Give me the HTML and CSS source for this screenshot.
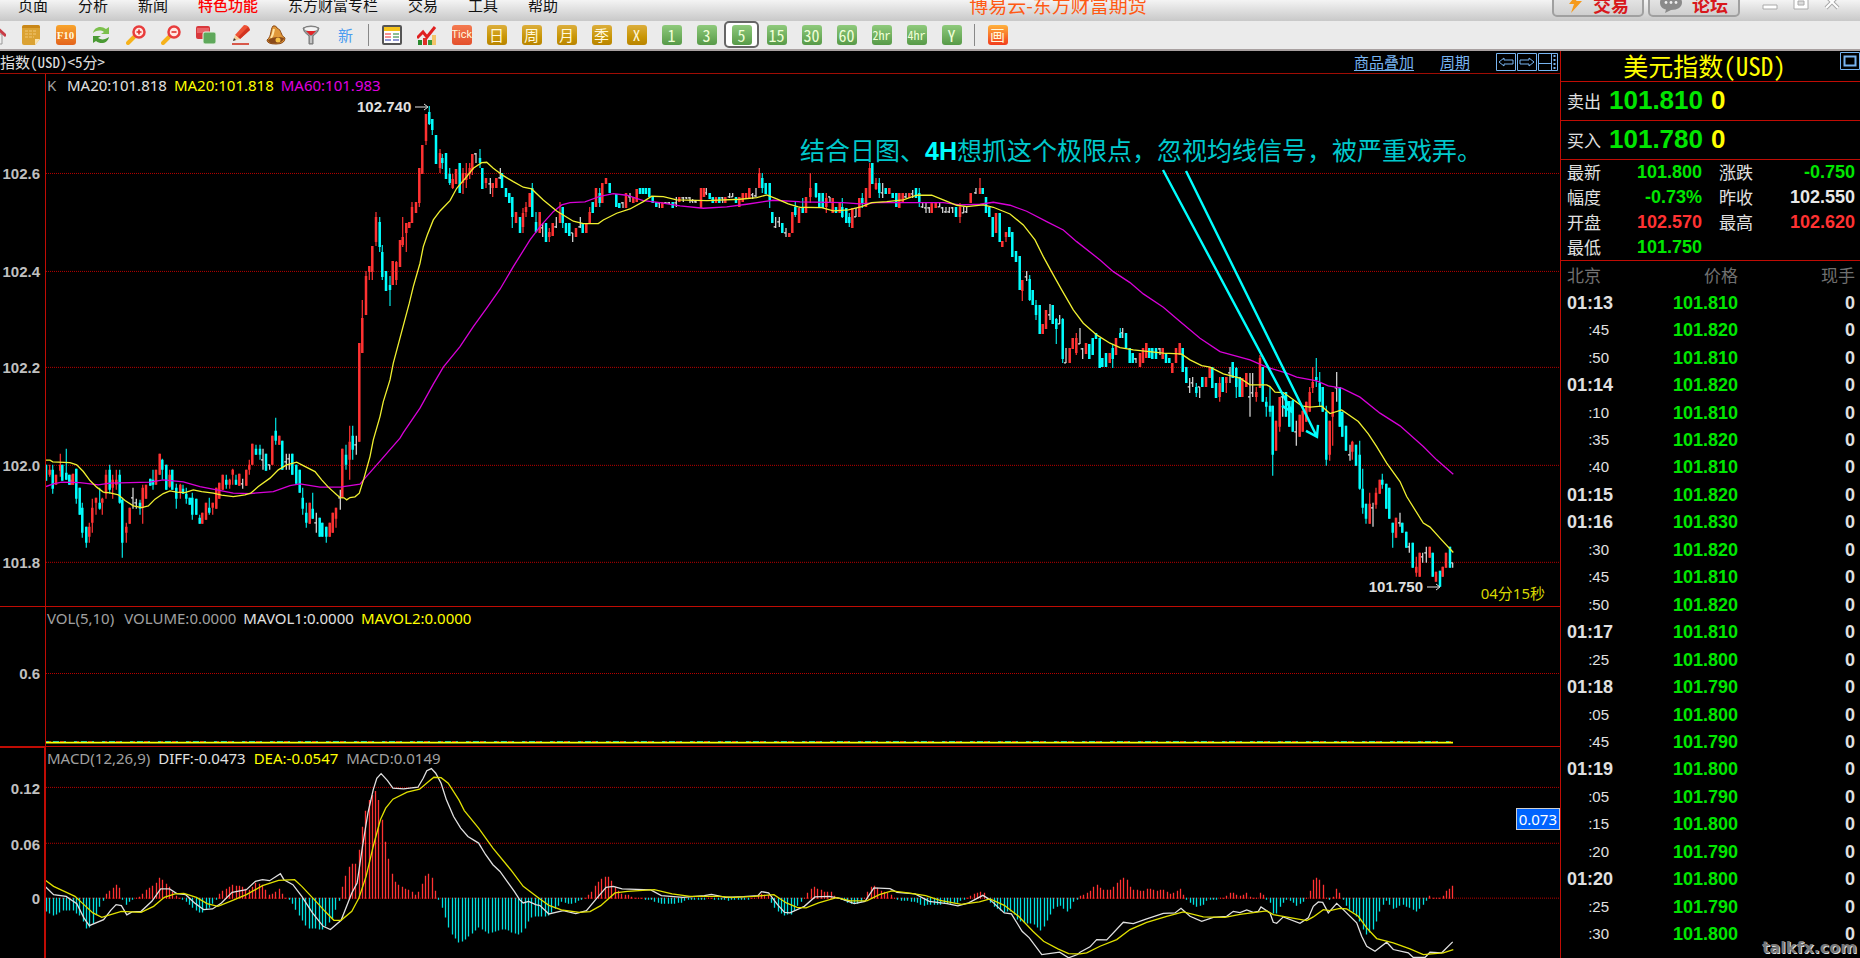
FILE: index.html
```html
<!DOCTYPE html>
<html lang="zh-CN">
<head>
<meta charset="utf-8">
<title>博易云-东方财富期货</title>
<link rel="stylesheet" href="styles.css">
</head>
<body>
<header class="menubar">
  <nav class="menus">
    <button>页面</button><button>分析</button><button>新闻</button><button class="hot">特色功能</button><button>东方财富专栏</button><button>交易</button><button>工具</button><button>帮助</button>
  </nav>
  <h1 class="app-title">博易云-东方财富期货</h1>
  <div class="window-tools">
    <button class="pill"><svg width="16" height="20" viewBox="0 0 16 20"><path d="M10 0L2 10h5L4 19 15 7H9l4-7z" fill="#f59a1c"/></svg>交易</button>
    <button class="pill"><svg width="22" height="18" viewBox="0 0 22 18"><path d="M11 0C4 0 0 3 0 7.500S3 14 6 14.500L5 18l6-3c7 0 11-3 11-7.500S18 0 11 0z" fill="#8a8a8a"/><g fill="#eee"><circle cx="6" cy="7.500" r="1.400"/><circle cx="11" cy="7.500" r="1.400"/><circle cx="16" cy="7.500" r="1.400"/></g></svg>论坛</button>
    <div class="win-buttons">
      <button aria-label="最小化"><svg width="16" height="14" viewBox="0 0 16 14"><path d="M1 9h14v4H1z" fill="#fff" stroke="#aaa"/></svg></button>
      <button aria-label="还原"><svg width="16" height="14" viewBox="0 0 16 14"><path d="M1 1h14v12H1z" fill="#fff" stroke="#aaa"/><path d="M5 5h6v4H5z" fill="#ddd" stroke="#aaa"/></svg></button>
      <button aria-label="关闭"><svg width="16" height="14" viewBox="0 0 16 14"><path d="M2 0L14 12M14 0L2 12" stroke="#aaa" stroke-width="4"/><path d="M2 0L14 12M14 0L2 12" stroke="#fff" stroke-width="2"/></svg></button>
    </div>
  </div>
</header>

<div class="toolbar">
  <button aria-label="首页"><svg width="20" height="20" viewBox="0 0 20 20"><path d="M4 9h12v10H4z" fill="#eee" stroke="#999"/><path d="M8 12h4v7H8z" fill="#b04040"/><path d="M0 11L10 2l10 9" fill="none" stroke="#c83c46" stroke-width="3"/></svg></button>
  <button aria-label="便签"><svg width="20" height="20" viewBox="0 0 20 20"><path d="M3 0h14q2 0 2 2v12l-5 6H3q-2 0-2-2V2q0-2 2-2z" fill="#dba233"/><path d="M1 3q0-3 3-3h13q2 0 2 3z" fill="#c98718"/><path d="M4 6h12M4 9h12M4 12h9" stroke="#f2c878" stroke-dasharray="3 1"/><path d="M14 20v-6h5z" fill="#fbe3ae"/></svg></button>
  <button aria-label="F10"><span class="tile f10">F10</span></button>
  <button aria-label="刷新"><svg width="20" height="20" viewBox="0 0 20 20"><path d="M2 8C3 2 10 0 15 4l3-2v7h-8l3-2C10 5 6 5 2 8z" fill="#7cc04c"/><path d="M18 12c-1 6-8 8-13 4l-3 2v-7h8l-3 2c3 2 7 2 11-1z" fill="#4a9a34"/></svg></button>
  <button aria-label="放大"><svg width="20" height="20" viewBox="0 0 20 20"><path d="M8 12l-6 6" stroke="#f6b21b" stroke-width="4" stroke-linecap="round"/><circle cx="13" cy="7" r="5.500" fill="#ffe8e4" stroke="#e83c3c" stroke-width="2.500"/><path d="M10.500 7h5M13 4.500v5" stroke="#e0302c" stroke-width="1.600"/></svg></button>
  <button aria-label="缩小"><svg width="20" height="20" viewBox="0 0 20 20"><path d="M8 12l-6 6" stroke="#f6b21b" stroke-width="4" stroke-linecap="round"/><circle cx="13" cy="7" r="5.500" fill="#ffe8e4" stroke="#e83c3c" stroke-width="2.500"/><path d="M10.500 7h5" stroke="#e0302c" stroke-width="1.600"/></svg></button>
  <button aria-label="叠加"><svg width="20" height="20" viewBox="0 0 20 20"><rect x="0" y="1" width="14" height="13" rx="2" fill="#d8383c"/><path d="M1 8h12V3H1z" fill="#ea6468"/><rect x="7" y="7" width="13" height="12" rx="2" fill="#5fa85b" stroke="#e8f2e6"/></svg></button>
  <button aria-label="画线"><svg width="20" height="20" viewBox="0 0 20 20"><path d="M4 10L13 0q5 0 6 5L9 14z" fill="#ee5236"/><path d="M7 12L17 2l2 3L9 14z" fill="#d23420"/><path d="M4 10l-2 6 7-2z" fill="#f4cf98"/><path d="M2 16l1-3 2 2z" fill="#333"/><path d="M1 19h17" stroke="#d8584a" stroke-width="2"/></svg></button>
  <button aria-label="预警"><svg width="20" height="20" viewBox="0 0 20 20"><path d="M7 1q3-1 4 2c5 2 3 7 8 10q0 6-9 6-9 0-9-4C6 11 4 5 7 1z" fill="#e0983a" stroke="#8a4712"/><path d="M8 4q-1 6-3 9" stroke="#ffe2a0" stroke-width="2" fill="none"/><path d="M2 15c4-3 11-4 16-2 0 6-15 8-16 2z" fill="#8a4a1a"/><circle cx="12" cy="15" r="2.500" fill="#f7c046"/></svg></button>
  <button aria-label="筛选"><svg width="20" height="20" viewBox="0 0 20 20"><path d="M2 3q8-4 16 0 0 4-6 8v8H8v-8Q2 7 2 3z" fill="#999" stroke="#777"/><ellipse cx="10" cy="4" rx="6.500" ry="2" fill="#f4f4f4"/><path d="M5 6h10l-4 4H9z" fill="#e02428"/><path d="M10 11v7" stroke="#eee"/></svg></button>
  <button class="new-btn">新</button>
  <i class="sep"></i>
  <button aria-label="报价"><svg width="20" height="20" viewBox="0 0 20 20"><rect x="1" y="1" width="18" height="18" rx="1" fill="#fff" stroke="#555" stroke-width="2"/><path d="M2 2h16v4H2z" fill="#f6c41c"/><path d="M3 9h6M3 12h6" stroke="#e22"/><path d="M11 9h6M11 12h6" stroke="#197a2b"/><path d="M3 15h6" stroke="#23a"/><path d="M11 15h6" stroke="#23a"/></svg></button>
  <button aria-label="走势"><svg width="20" height="20" viewBox="0 0 20 20"><path d="M1 15h4v5H1z" fill="#2a8a2e"/><path d="M6 13h4v7H6z" fill="#e03028"/><path d="M11 15h4v5h-4z" fill="#3a9a3a"/><path d="M15 10h4v10h-4z" fill="#f3c56a"/><path d="M0 13l6-6 4 5 8-10" fill="none" stroke="#e02020" stroke-width="3"/></svg></button>
  <button><span class="tile tick">Tick</span></button>
  <button><span class="tile gold">日</span></button>
  <button><span class="tile gold">周</span></button>
  <button><span class="tile gold">月</span></button>
  <button><span class="tile gold">季</span></button>
  <button><span class="tile gold">X</span></button>
  <button><span class="tile green">1</span></button>
  <button><span class="tile green">3</span></button>
  <button class="active"><span class="tile green">5</span></button>
  <button><span class="tile green">15</span></button>
  <button><span class="tile green">30</span></button>
  <button><span class="tile green">60</span></button>
  <button><span class="tile green small">2hr</span></button>
  <button><span class="tile green small">4hr</span></button>
  <button><span class="tile green">Y</span></button>
  <i class="sep"></i>
  <button><span class="tile draw">画</span></button>
</div>

<main class="workspace">
  <section class="charts">
    <div class="chart-head">
      <span class="symbol">指数(USD)&lt;5分&gt;</span>
      <a href="#overlay">商品叠加</a>
      <a href="#period">周期</a>
      <div class="nav-icons">
        <button aria-label="向左"><svg width="20" height="18" viewBox="0 0 20 18"><path d="M.500.500h19v17H.500zM3 9l5-4v2h9v4H8v2z"/></svg></button>
        <button aria-label="向右"><svg width="20" height="18" viewBox="0 0 20 18"><path d="M.500.500h19v17H.500zM17 9l-5-4v2H3v4h9v2z"/></svg></button>
        <button aria-label="布局"><svg width="20" height="18" viewBox="0 0 20 18"><path d="M.500.500h19v17H.500zM13.500 1v16M1 10.500h12"/><path d="M16.500 2v14" stroke-dasharray="2 2" stroke-width="2"/></svg></button>
      </div>
    </div>

    <div class="pane pane-price">
      <div class="axis" id="axis-price"></div>
      <div class="plot">
        <svg id="price" viewBox="46 74 1514 532" preserveAspectRatio="none"></svg>
        <div class="legend"><span class="dim key">K</span><span>MA20:101.818</span><span class="yellow">MA20:101.818</span><span class="magenta">MA60:101.983</span></div>
        <p class="note">结合日图、<b>4H</b>想抓这个极限点，忽视均线信号，被严重戏弄。</p>
        <span class="mark mark-high">102.740<svg width="14" height="8" viewBox="0 0 14 8"><path d="M0 4h12M9 1l4 3-4 3"/></svg></span>
        <span class="mark mark-low">101.750<svg width="14" height="8" viewBox="0 0 14 8"><path d="M0 4h12M9 1l4 3-4 3"/></svg></span>
        <span class="countdown">04分15秒</span>
      </div>
    </div>

    <div class="pane pane-vol">
      <div class="axis" id="axis-vol"></div>
      <div class="plot">
        <svg id="vol" viewBox="46 607 1514 139" preserveAspectRatio="none"></svg>
        <div class="legend"><span class="dim wide">VOL(5,10)</span><span class="dim">VOLUME:0.0000</span><span>MAVOL1:0.0000</span><span class="yellow">MAVOL2:0.0000</span></div>
      </div>
    </div>

    <div class="pane pane-macd">
      <div class="axis" id="axis-macd"></div>
      <div class="plot">
        <svg id="macd" viewBox="46 747 1514 211" preserveAspectRatio="none"></svg>
        <div class="legend loose"><span class="dim">MACD(12,26,9)</span><span>DIFF:-0.0473</span><span class="yellow">DEA:-0.0547</span><span class="dim">MACD:0.0149</span></div>
        <span class="cursor-value">0.073</span>
      </div>
    </div>
  </section>

  <aside class="quote">
    <div class="quote-title">
      <h2>美元指数(USD)</h2>
      <button aria-label="最大化"><svg width="20" height="18" viewBox="0 0 20 18"><path d="M.500.500h19v17H.500z"/><path d="M4.500 4.500h11v9h-11z" stroke-width="2"/></svg></button>
    </div>
    <div class="deal"><span>卖出</span><b>101.810</b><b class="yellow">0</b></div>
    <div class="deal"><span>买入</span><b>101.780</b><b class="yellow">0</b></div>
    <dl class="stats">
      <dt>最新</dt><dd>101.800</dd><dt>涨跌</dt><dd>-0.750</dd>
      <dt>幅度</dt><dd>-0.73%</dd><dt>昨收</dt><dd class="flat">102.550</dd>
      <dt>开盘</dt><dd class="up">102.570</dd><dt>最高</dt><dd class="up">102.620</dd>
      <dt>最低</dt><dd>101.750</dd>
    </dl>
    <div class="ticks">
      <table>
        <thead><tr><th>北京</th><th>价格</th><th>现手</th></tr></thead>
        <tbody>
          <tr><td class="min">01:13</td><td>101.810</td><td>0</td></tr>
          <tr><td>:45</td><td>101.820</td><td>0</td></tr>
          <tr><td>:50</td><td>101.810</td><td>0</td></tr>
          <tr><td class="min">01:14</td><td>101.820</td><td>0</td></tr>
          <tr><td>:10</td><td>101.810</td><td>0</td></tr>
          <tr><td>:35</td><td>101.820</td><td>0</td></tr>
          <tr><td>:40</td><td>101.810</td><td>0</td></tr>
          <tr><td class="min">01:15</td><td>101.820</td><td>0</td></tr>
          <tr><td class="min">01:16</td><td>101.830</td><td>0</td></tr>
          <tr><td>:30</td><td>101.820</td><td>0</td></tr>
          <tr><td>:45</td><td>101.810</td><td>0</td></tr>
          <tr><td>:50</td><td>101.820</td><td>0</td></tr>
          <tr><td class="min">01:17</td><td>101.810</td><td>0</td></tr>
          <tr><td>:25</td><td>101.800</td><td>0</td></tr>
          <tr><td class="min">01:18</td><td>101.790</td><td>0</td></tr>
          <tr><td>:05</td><td>101.800</td><td>0</td></tr>
          <tr><td>:45</td><td>101.790</td><td>0</td></tr>
          <tr><td class="min">01:19</td><td>101.800</td><td>0</td></tr>
          <tr><td>:05</td><td>101.790</td><td>0</td></tr>
          <tr><td>:15</td><td>101.800</td><td>0</td></tr>
          <tr><td>:20</td><td>101.790</td><td>0</td></tr>
          <tr><td class="min">01:20</td><td>101.800</td><td>0</td></tr>
          <tr><td>:25</td><td>101.790</td><td>0</td></tr>
          <tr><td>:30</td><td>101.800</td><td>0</td></tr>
        </tbody>
      </table>
    </div>
    <span class="watermark">talkfx.com</span>
  </aside>
</main>
<script src="charts.js"></script>
</body>
</html>
```

FILE: styles.css
```css
* { box-sizing: border-box; }

body {
  margin: 0;
  height: 100vh;
  display: flex;
  flex-direction: column;
  overflow: hidden;
  background: #000;
  color: #e0e0e0;
  font-family: "Noto Sans", "Noto Sans CJK SC", sans-serif;
  font-size: 15px;
}

button {
  margin: 0;
  padding: 0;
  border: 0;
  background: none;
  color: inherit;
  font: inherit;
}

h1, h2, p, dl, dd { margin: 0; font-weight: 400; }

.yellow { color: #ff0; }
.magenta { color: #e000e0; }
.dim { color: #a0a0a0; }

/* menu bar */
.menubar {
  flex: none;
  height: 21px;
  position: relative;
  display: flex;
  justify-content: space-between;
  align-items: flex-start;
  overflow: hidden;
  background: linear-gradient(#f4f4f4, #c8c8c8);
  color: #111;
  font-family: "Noto Sans CJK SC", sans-serif;
}
.menus { display: flex; gap: 30px; padding-left: 18px; line-height: 20px; margin-top: -5px; }
.menus .hot { color: #f00; font-weight: 500; }
.app-title {
  position: absolute;
  left: 52%;
  top: -9px;
  padding-left: 2px;
  font-size: 19px;
  line-height: 28px;
  color: #ff5a14;
}
.window-tools { display: flex; gap: 4px; }
.pill {
  width: 92px;
  height: 27px;
  margin-top: -10px;
  display: flex;
  align-items: center;
  justify-content: center;
  gap: 10px;
  border: 2px solid #a0a0a0;
  border-radius: 5px;
  background: linear-gradient(#eee, #cfcfcf);
  color: #d8181c;
  font-size: 18px;
  font-weight: 700;
}
.win-buttons { display: flex; gap: 15px; width: 116px; padding-left: 18px; margin-top: -10px; }

/* toolbar */
.toolbar {
  flex: none;
  height: 30px;
  display: flex;
  align-items: center;
  padding-bottom: 1px;
  margin-left: -22px;
  background: #ebebeb;
  border-bottom: 2px solid #a8a0a0;
}
.toolbar button {
  flex: none;
  width: 35px;
  height: 27px;
  display: flex;
  align-items: center;
  justify-content: center;
}
.toolbar .active { border: 2px solid #666; border-radius: 5px; background: #fff; }
.toolbar .new-btn { color: #4a9cf0; font: 15px "Noto Sans CJK SC", sans-serif; }
.sep { flex: none; width: 1px; height: 22px; margin: 0 5px; background: #888; }
.tile {
  width: 20px;
  height: 20px;
  border-radius: 3px;
  display: block;
  text-align: center;
  color: #fff8dc;
  font: 15px/20px "Noto Sans Mono CJK SC", "Noto Sans CJK SC", sans-serif;
}
.gold { background: linear-gradient(#dcae3c, #c89606 60%, #b98400); }
.green { background: linear-gradient(#8fca7c, #579a48); color: #f0ffd8; font-size: 16px; }
.small { font-size: 12px; }
.tick { background: linear-gradient(#f47a50, #e4502c); font: 11px/20px Roboto, sans-serif; }
.draw { background: linear-gradient(#ffb23c, #f23c1c); }
.f10 { background: linear-gradient(#f8a42c, #e4641c); font: 700 11px/20px "Liberation Serif", serif; }

/* workspace */
.workspace { flex: 1; min-height: 0; display: flex; }
.charts { flex: 1; min-width: 0; display: flex; flex-direction: column; }
.chart-head {
  flex: none;
  height: 23px;
  display: flex;
  align-items: center;
  padding-right: 2px;
  border-bottom: 1px solid #a00c04;
  font: 15px/20px "Noto Sans Mono CJK SC", "Noto Sans CJK SC", sans-serif;
}
.symbol { margin-right: auto; }
.chart-head a { color: #78b4f0; margin-right: 26px; text-underline-offset: 2px; }
.nav-icons { display: flex; gap: 1px; }
.nav-icons button, .quote-title button { display: flex; }
.nav-icons path, .quote-title path { fill: none; stroke: #78b4f0; }

.pane { display: flex; min-height: 0; border-bottom: 1px solid #c00c04; }
.pane-price { flex: 533 1 0; }
.pane-vol { flex: 140 1 0; }
.pane-macd { flex: 211 1 0; border-bottom: 0; }
.axis {
  flex: none;
  width: 46px;
  position: relative;
  border-right: 1px solid #c00c04;
  color: #c0c0c0;
  font: 700 15px/18px "Liberation Sans", sans-serif;
}
.pane-macd .axis { border-right-width: 2px; border-top: 1px solid #c00c04; }
.axis span { position: absolute; right: 5px; margin-top: -8px; }
.pane-macd .axis span { right: 4px; }
.plot { flex: 1; min-width: 0; position: relative; overflow: hidden; }
.plot > svg { position: absolute; width: 100%; height: 100%; }

.legend { position: absolute; top: 1px; left: 1px; display: flex; gap: 7px; line-height: 20px; }
.legend .key { width: 13px; }
.legend .wide { margin-right: 3px; }
.loose { gap: 8px; }
.note {
  position: absolute;
  left: 50%;
  top: 58px;
  margin-left: -3px;
  white-space: nowrap;
  color: #00c8cc;
  font: 400 25px/34px "Noto Sans CJK SC", sans-serif;
}
.note b { color: #0ff; font: 700 25px/34px "Liberation Sans", sans-serif; }
.mark {
  position: absolute;
  display: flex;
  align-items: center;
  gap: 4px;
  font: 700 15px/18px "Liberation Sans", sans-serif;
}
.mark path { fill: none; stroke: #e0e0e0; }
.mark-high { left: 311px; top: 24px; }
.mark-low { right: 119px; bottom: 10px; }
.countdown { position: absolute; right: 15px; bottom: 3px; line-height: 20px; color: #d8d800; }
.cursor-value {
  position: absolute;
  right: 0;
  top: 61px;
  padding: 0 2px;
  border: 1px solid #d0d0d0;
  background: #0064ff;
  color: #fff;
  line-height: 20px;
}

/* quote panel */
.quote {
  flex: none;
  width: 300px;
  position: relative;
  display: flex;
  flex-direction: column;
  border-left: 1px solid #c00c04;
  font-family: "Noto Sans CJK SC", sans-serif;
}
.quote-title { height: 31px; position: relative; border-bottom: 1px solid #c00c04; }
.quote-title h2 {
  color: #ff0;
  text-align: center;
  padding-right: 12px;
  font: 25px/29px "Noto Sans Mono CJK SC", "Noto Sans CJK SC", sans-serif;
}
.quote-title button { position: absolute; top: 1px; right: 0; }
.deal {
  height: 39px;
  display: flex;
  align-items: center;
  gap: 8px;
  padding: 0 0 2px 6px;
  border-bottom: 1px solid #c00c04;
  font-size: 17px;
}
.deal b { color: #00e600; font: 700 26px/30px "Liberation Sans", sans-serif; }
.deal .yellow { color: #ff0; }
.stats {
  height: 101px;
  display: grid;
  grid-template-columns: 40px 95px 57px 96px;
  grid-auto-rows: 25px;
  padding-left: 6px;
  border-bottom: 1px solid #c00c04;
  font-size: 17px;
  line-height: 24px;
}
.stats dt:nth-of-type(even) { padding-left: 17px; }
.stats dd { text-align: right; color: #00e600; font: 700 18px/25px "Liberation Sans", sans-serif; }
.stats .flat { color: #e8e8e8; }
.stats .up { color: #ff3232; }

.ticks { flex: 1; min-height: 0; padding: 0 5px 10px 6px; }
.ticks table { width: 100%; height: 100%; border-collapse: collapse; table-layout: fixed; }
.ticks thead tr { height: 28px; }
.ticks th {
  padding: 0 0 2px;
  color: #707070;
  font-size: 17px;
  font-weight: 400;
  line-height: 25px;
  text-align: right;
}
.ticks th:first-child { width: 52px; text-align: left; }
.ticks th:last-child { width: 117px; }
.ticks td {
  padding: 0;
  text-align: right;
  color: #e0e0e0;
  font: 700 18px/20px "Liberation Sans", sans-serif;
}
.ticks td:first-child { padding-right: 10px; font-size: 15px; font-weight: 400; }
.ticks td.min:first-child { padding-right: 6px; font-size: 18px; font-weight: 700; }
.ticks td:nth-child(2) { color: #00e600; }
.watermark {
  position: absolute;
  right: 3px;
  bottom: 0;
  color: #777;
  text-shadow: 1px 1px 0 #ddd;
  font: 700 16px/20px "DejaVu Sans", sans-serif;
}
```

FILE: charts.js
```js
const NS = 'http://www.w3.org/2000/svg';
const RED = '#ff3232', CYAN = '#00ffff', WHITE = '#e0e0e0', YELLOW = '#f0f030', MAGENTA = '#d800d8';

function path(svg, d, stroke, width = 1, extra = {}) {
  const el = document.createElementNS(NS, 'path');
  const attrs = { d, stroke, 'stroke-width': width, fill: 'none', ...extra };
  for (const k in attrs) el.setAttribute(k, attrs[k]);
  svg.appendChild(el);
}
const crisp = { 'shape-rendering': 'crispEdges' };

function grid(svg, axisId, top, height, lines) {
  const axis = document.getElementById(axisId);
  for (const [label, y] of lines) {
    path(svg, `M46 ${y + 0.5}H1560`, '#b80000', 1, { 'stroke-dasharray': '1 1', ...crisp });
    const s = document.createElement('span');
    s.textContent = label;
    s.style.top = `${((y - top) / height * 100).toFixed(2)}%`;
    axis.appendChild(s);
  }
}

/* Each block: origin x, origin y, units per pixel in x and y, data. */
function points(blocks) {
  const out = [];
  for (const [ox, oy, sx, sy, text] of blocks)
    for (const p of text.trim().split(/\s+/)) {
      const [x, y] = p.split(',').map(Number);
      out.push([ox + x / sx, oy + y / sy]);
    }
  return out;
}
const line = pts => 'M' + pts.map(p => p[0].toFixed(1) + ' ' + p[1].toFixed(1)).join('L');

/* price */
const price = document.getElementById('price');
grid(price, 'axis-price', 74, 532, [['102.6', 173], ['102.4', 271], ['102.2', 367], ['102.0', 465], ['101.8', 562]]);

/* colour + x, high, low [, body top, body bottom]; white: x, high, low, close */
const candles = [
  [0, 420, `c138,135,182 r149,135,170,150,165 c158,135,222,150,208 r168,165,195 r181,103,170,135,152 c187,135,182
  c199,88,180,160,180 c208,165,195 r213,165,195,180,195 r219,163,195 c229,148,252,148,237 c239,205,285
  c247,250,355,265,340 c259,320,385,320,370 r268,310,370,320,350 r277,237,340,265,310 r288,235,285,235,250
  c299,205,270,250,268 r307,235,285,237,250 r318,150,237,165,222 c329,135,222,150,210 r338,165,237,180,205
  r349,150,210,180,195 c359,150,252,165,250 c367,235,415,240,370 r379,310,370,322,340 r389,265,312
  w399,205,268,235 w409,237,268,250 c420,240,285,250,268 r428,195,313,205,265 r438,195,237 c451,178,198
  c459,150,210,180,195 r468,150,195 r479,103,165 c487,118,180,120,150 c499,135,210 r509,150,205,165,200
  c517,150,210 c529,193,268,205,237 r541,193,237,195,220 c549,195,222,208,222 c559,205,252,222,237 c569,235,255
  c577,220,300,235,285 c589,237,285 c599,285,313,295,313 r607,280,313 r618,250,300 c628,235,285,265,280
  r638,250,285,250,265 r649,205,268 r658,190,237 r668,165,210 c679,165,208,180,195 r689,178,208,180,195
  r698,148,195,150,165 c708,165,195,180,195 r718,163,198 w728,178,208,192 r739,150,198 r748,120,165,135,150
  r757,73,135 c768,75,105,88,105 c780,75,120,88,105 w789,88,150,120 c798,103,152 w809,135,150,135 r817,47,135
  c827,-5,75,33,62 r838,47,75 c847,62,150 w859,103,150,125 w868,103,150,118 c877,103,165 c889,135,192 c899,150,220
  c908,205,285,235,268 c919,250,325,280,310 r929,250,313 c938,220,298,268,298 w949,280,340,310 c959,295,352
  c967,310,352 c979,322,370,322,352 r989,310,352 r998,280,340 r1008,265,325,265,298`],
  [340, 80, `w1,1230,1290,1255 r7,1108,1255 c18,1095,1170,1125,1155 r29,1038,1200,1085,1140 c38,1038,1140,1068,1110
  w49,1068,1125,1095 r58,790,1085 r67,660,820,715,820 r78,573,705,588,705 r88,557,600,557,575 r97,497,600,497,575
  r108,397,497,410,485 c119,410,515,425,500 c127,495,600,515,590 c138,573,632 c150,588,677,615,630 r158,543,615
  r169,543,615,545,600 r180,480,560 r188,412,500,470,495 r199,428,515,430,460 r208,425,443 r216,367,430,382,428
  r228,367,400 r238,265,382,265,368 r247,195,283 r258,103,195,103,182 c268,78,135,95,133 c277,118,165,118,150
  c288,165,253 r300,208,280,220,265 c307,222,268,235,250 c318,220,297 c329,265,315,282,310 r338,282,328,298,325
  r348,267,312 c359,250,340 r369,265,342,280,310 r379,250,325,280,300 r389,250,297,265,282 r397,222,285,222,270
  w408,220,250,222 c420,208,265,235,250 c427,265,328 r438,295,325,295,310 w451,295,342,312 r458,310,352,310,325
  r469,295,325 w481,265,297,295 c486,280,325 c498,325,352 c508,340,368 c517,352,443,352,412 r528,397,428
  c540,412,458 r549,385,458,400,440 r558,367,412,382,397 r569,340,382 c577,310,412,325,412 c588,397,458,425,455
  r599,397,460 w608,428,470,445 c618,428,485 r628,443,485,455,470 r638,428,468 w649,412,443,440
  r660,367,428,400,428 c668,382,443,382,428 c678,428,458 c688,428,468 w698,458,485,458 r708,443,470
  w721,412,443,440 c728,428,458 r739,428,458 r749,382,430,397,428 c758,367,400 r768,325,382 c779,325,382,340,370
  r787,310,368 r798,295,312 c809,310,340 c829,343,382 c838,368,384 w849,367,383,368 r858,340,384 w870,340,367,352
  r880,352,368 r890,328,365 c900,325,343 c909,325,343 c918,325,343 c928,325,352 c938,352,370 c949,367,382
  w958,370,384,370 r967,367,384 w978,365,372,368 w988,365,372,368 c998,367,384 w1009,350,382,370 r1018,352,367
  w1030,352,365,355 w1040,350,358,353 w1050,352,368,353 w1058,358,368,362 w1068,362,370,366 r1083,325,385
  r1092,325,352 w1099,325,345,340 c1109,340,358 c1118,352,370 r1128,352,370 c1138,352,370 w1148,350,368,355
  r1156,352,370 w1169,340,355,352 w1178,340,352,350 c1188,350,370 r1198,352,382 r1208,340,367 r1218,340,358
  r1228,325,356 w1238,340,356,345 w1248,325,352,348 r1258,265,325,280,325 c1267,280,340,295,325 c1277,310,343
  c1289,310,384,310,360 c1297,397,430 w1307,412,443,440 w1318,412,440,425 c1327,428,458 w1338,443,470,458
  r1348,458,470 r1357,397,458 c1366,367,412,380,405 r1377,385,430`],
  [780, 120, `c68,235,280,262,278 r78,232,280 r91,160,250,205,230 c108,190,235,190,230 c118,220,265 c128,220,265
  r139,220,280,235,262 w150,232,250,232 r158,235,280 c168,262,278 r179,250,278 c187,235,295,262,290 c199,265,310
  c208,278,322,290,310 r217,265,325 w228,265,292,290 r238,235,292 c247,220,265,235,250 r258,205,262
  r269,130,235,145,235 c277,128,192 r288,175,210,190,208 c298,175,235,190,220 w308,190,235,220 c317,205,222
  r328,205,222 c338,220,235 c349,220,262 r358,220,265 r368,220,250 w378,220,235,232 r388,220,235 w398,210,235,222
  c408,205,235 c418,205,262,220,250 w428,250,265,262 w438,250,278,265 w448,260,278,265 r455,250,280 r467,248,265
  w479,250,262,262 w488,262,278,265 w498,262,278,275 w508,262,278,275 w518,262,278,265 c528,262,292
  r540,250,308,262,290 w551,262,278,278 w560,260,278,275 r572,220,250 w588,205,222,220 r600,175,222,205,222
  c608,205,222 c618,232,278 c628,262,292 c638,292,350 r648,278,338 c659,278,365 r667,362,382 r678,335,365,335,350
  c688,322,350 c697,335,410 c708,392,425 c719,408,510 r727,480,542,480,512 w740,452,482,470 c749,465,542,478,540
  c758,510,555 c768,540,600,555,585 c779,555,642 r788,612,642 r798,570,628 w810,552,600,585 c818,555,612
  c829,595,672,598,628 w839,585,612,612 c848,595,728,598,718 w858,685,728,728 r869,685,728 r878,655,688
  r889,640,705,655,700 w900,625,672,672 w908,685,718,688 r918,670,702 c928,672,718 c938,655,705 c948,640,658
  c959,655,745 c967,715,742 c978,700,742 r989,700,728 c998,672,745,685,718 r1008,655,705 c1021,625,655,640,655
  w1028,625,655,640 c1038,640,685 c1049,685,730 c1058,700,730 w1068,715,730,718 r1080,700,742 r1089,685,730
  r1099,670,715 c1108,685,715 c1117,685,718 c1128,685,718 w1140,685,705,688 r1148,685,718 c1158,700,730
  c1168,715,730 r1177,730,760 r1188,685,730 r1199,670,705 c1208,685,755`],
  [1140, 150, `c139,652,698 w149,685,730,712 w158,682,712,698 c169,698,742,712,730 w179,712,745,712 c187,682,712
  r198,682,712 r209,652,685 c217,652,715 c228,698,745 r239,682,755,700,742 c248,682,725 r259,682,728,682,700
  w270,652,700,670 c278,637,685 c289,652,745,655,710 c299,682,742 r307,685,742 r319,668,712 w330,668,800,742
  w338,668,742,730 r349,712,755,725,740 r360,615,715,625,715 c368,652,755 c379,740,800,755,770 c390,712,800,768,785
  c398,768,977,768,915 r408,812,902 r419,742,845,742,830 w428,727,800,742 c438,727,800 c448,752,830 c458,752,845
  w469,812,887,845 r479,795,860 r488,782,845 r499,755,815 r509,712,785,727,785 r518,652,730,695,715
  c529,625,712,680,690 c539,667,770,700,755 c548,712,785 c559,768,947,785,930 r569,812,932,812,915
  r578,727,887,727,800 w590,667,755,715 c599,712,830 c607,785,860 c618,827,902 w630,885,932,915
  r637,872,930,875,905 c648,885,947 c659,872,1020,915,1018 c668,957,1092,1018,1075 c678,1062,1122,1062,1108
  r689,1030,1122,1062,1122 w699,1060,1132,1075 r708,1015,1078,1030,1065 r719,990,1032 c727,972,1018,990,1005
  c739,1003,1078 c748,1015,1107 c758,1120,1195,1120,1150 r768,1105,1163 w780,1090,1132,1120 c787,1120,1150
  c799,1147,1195 w808,1178,1208,1192 c818,1178,1255 r829,1222,1280,1250,1268 r839,1208,1280 w848,1208,1238,1222
  w859,1190,1240,1208 r869,1192,1225 c878,1208,1280 r888,1265,1297 c900,1262,1310 r908,1250,1280 r918,1208,1255
  c930,1192,1255 w938,1238,1255,1240`]
];
const wick = { r: '', c: '', w: '' }, body = { r: '', c: '', w: '' };
for (const [ox, oy, text] of candles)
  for (const item of text.trim().split(/\s+/)) {
    const kind = item[0];
    const [x, hi, lo, a, b] = item.slice(1).split(',').map(Number);
    const px = (ox + x / 3).toFixed(1);
    const Y = v => Math.round(oy + v / 3);
    wick[kind] += `M${px} ${Y(hi)}V${Y(lo)}`;
    if (kind === 'w') body.w += `M${px - 2} ${Y(a)}H${px}`;
    else body[kind] += `M${px} ${Y(a ?? hi)}V${Y(b ?? lo)}`;
  }
path(price, wick.r, RED, 1.2);
path(price, wick.c, '#00e4e4', 1.2);
path(price, wick.w, WHITE, 1.2);
path(price, body.w, WHITE, 1.2);
path(price, body.r, RED, 2.5);
path(price, body.c, CYAN, 2.5);

path(price, line(points([
  [0, 420, 3, 3, `138,200 160,192 185,187 240,188 295,195 330,190 450,187 490,180 550,186 600,200 650,210 700,220 750,221 820,215 870,197 900,192 960,202 1025,202`],
  [340, 80, 3, 3, `10,1220 60,1213 75,1195 110,1155 180,1075 190,1058 240,985 280,913 310,862 360,800 400,740 440,685 480,628 520,560 570,480 600,440 640,395 665,375 690,368 735,366 780,349 820,341 860,346 910,362 960,368 1020,378 1090,385 1160,381 1220,373 1300,361 1375,365`],
  [780, 120, 3, 3, `60,246 190,248 240,252 290,248 490,248 540,255 600,253 640,247 690,256 740,274 800,305 850,330 890,365 960,420 1000,455 1050,488 1090,522 1150,562 1200,605 1260,655 1320,695`],
  [1140, 150, 3, 3, `245,607 330,630 380,652 440,670 470,682 530,693 565,708 605,715 660,742 720,790 780,828 850,890 890,930 940,973`]
])), MAGENTA, 1.3);
path(price, line(points([
  [0, 420, 3, 3, `138,121 150,121 158,126 210,128 230,135 250,155 270,182 290,202 310,217 330,219 355,225 375,242 400,258 425,263 445,258 465,238 490,221 510,213 530,217 555,218 580,210 605,215 640,220 665,226 700,230 735,225 752,220 775,200 810,175 835,150 860,135 890,127 910,137 945,155 965,180 985,202 1010,225`],
  [340, 80, 3, 3, `0,1253 12,1254 20,1260 30,1253 45,1251 58,1240 72,1195 90,1130 100,1080 120,1010 130,965 150,900 160,850 185,755 208,670 220,620 240,550 250,500 262,465 280,420 300,393 330,362 350,325 380,290 400,265 425,248 440,247 460,265 490,287 520,305 550,322 575,327 610,360 650,393 700,424 730,431 775,431 790,420 830,400 870,387 910,365 935,349 970,350 1010,360 1100,362 1200,358 1250,353 1280,345 1310,357 1345,372 1375,381`],
  [780, 120, 3, 3, `60,262 125,263 160,273 205,270 245,260 275,248 320,245 370,240 410,226 455,226 490,240 530,256 560,260 610,255 640,262 690,282 730,315 765,360 790,410 820,465 845,510 880,570 910,610 950,645 990,670 1020,683 1060,690 1150,700 1200,702`],
  [1140, 150, 3, 3, `125,613 150,630 185,647 210,652 250,672 300,685 330,705 380,705 390,710 405,727 430,728 450,742 485,768 510,772 545,769 570,791 605,780 655,815 685,852 710,890 740,940 780,995 800,1040 850,1120 870,1132 900,1165 940,1208`]
])), YELLOW, 1.3);
path(price, 'M1163 170L1292 412M1282 406L1292 412L1293 400M1186 171L1317 437M1306 431L1317 437L1318 425', CYAN, 2.4);

/* volume */
const vol = document.getElementById('vol');
grid(vol, 'axis-vol', 607, 139, [['0.6', 673]]);
path(vol, 'M46 741H1453', CYAN, 1, { 'stroke-dasharray': '3 4 6 5 2 8' });
path(vol, 'M49 741H1453', RED, 1, { 'stroke-dasharray': '2 9 4 13' });
path(vol, 'M46 742H1453', '#ffff00', 1.6);

/* MACD */
const macd = document.getElementById('macd');
grid(macd, 'axis-macd', 747, 211, [['0.12', 787], ['0.06', 843], ['0', 898]]);

const hist = points([
  [0, 600, 2.8, 3, `128,935 150,950 180,932 205,933 225,950 243,990 260,975 275,930 290,900 298,880 328,853 340,870 345,905 355,916 370,898 390,893 410,870 430,858 450,830 460,845 475,862 495,890 520,905 545,930 565,942 590,920 605,896 620,875 650,855 675,860 700,870 715,850 735,855 755,888 785,865 795,890 815,905 845,960 860,985 905,990 930,960 945,915 955,890 960,850 980,795 1000,790 1010,715 1017,665 1027,618 1037,590 1054,572 1064,610 1072,672 1082,740 1093,797 1101,835 1112,852 1140,868 1155,875 1167,888 1175,870 1193,823 1205,823 1213,840 1222,885 1232,905 1242,935 1252,972 1262,1000 1288,1032 1310,1015 1340,985 1370,1002 1410,988 1457,1007 1475,980 1485,955 1505,950`],
  [540, 740, 2.8, 3, `0,530 20,533 45,505 60,487 85,495 105,485 120,478 130,470 148,453 158,430 175,415 187,407 197,415 213,445 233,468 243,463 265,474 310,477 330,490 370,493 400,487 415,480 450,480 470,473 500,478 525,483 550,477 600,475 615,462 640,465 650,495 665,515 685,527 705,525 720,500 735,480 747,467 755,450 768,441 785,450 800,457 815,457 828,472 840,478 870,492 890,492 905,480 915,462 925,441 940,437 950,450 980,462 990,474 1010,482 1050,486 1070,497 1110,495 1140,492 1170,488 1190,478 1215,462 1240,453 1250,472 1270,500 1300,518 1320,515 1340,545 1360,550 1385,555 1402,572 1412,560 1428,530 1440,505 1460,497 1475,518 1485,508 1495,485`],
  [1080, 740, 3, 3, `0,470 30,455 50,433 70,450 95,449 110,430 128,414 140,418 155,448 190,453 205,445 235,453 250,448 275,465 300,445 312,467 330,488 350,500 368,497 385,480 435,472 455,457 485,470 500,460 515,474 535,474 543,452 555,475 570,488 578,522 590,522 602,497 620,477 650,497 665,490 680,474 690,452 699,422 710,415 722,422 732,440 742,482 755,480 770,448 785,467 800,500 820,518 840,548 850,570 860,585 878,572 890,545 905,500 920,482 938,508 970,495 1010,515 1030,495 1050,467 1060,475 1085,473 1100,452 1121,437`]
]);
let up = '', down = '', k = 0;
for (let x = 46.5; x <= 1453.5; x += 3.325) {
  while (k < hist.length - 2 && hist[k + 1][0] < x) k++;
  const [x0, y0] = hist[k], [x1, y1] = hist[k + 1];
  const y = Math.round(y0 + (y1 - y0) * (x - x0) / (x1 - x0));
  const px = Math.floor(x) + 0.5;
  if (y < 899) up += `M${px} 899V${Math.min(y, 898)}`;
  else down += `M${px} 898V${Math.max(y, 900)}`;
}
path(macd, down, '#00e0e0', 1.3);
path(macd, up, RED, 1.3);
path(macd, line(points([
  [0, 600, 2.8, 3, `128,862 150,885 185,890 215,912 235,955 250,978 290,960 310,932 325,915 340,918 355,946 370,937 395,935 425,905 450,868 475,868 495,882 520,885 545,910 570,930 595,928 620,910 650,878 690,870 715,845 735,840 755,843 785,822 795,840 820,855 845,890 875,940 905,980 925,990 955,962 985,880 1000,850 1015,740 1030,640 1045,570 1055,535 1067,521 1085,542 1100,565 1130,567 1170,562 1185,535 1195,512 1208,506 1220,520 1235,550 1250,600 1270,650 1290,685 1310,710 1340,730 1360,765 1380,795 1400,815 1420,845 1440,875 1455,900 1465,910 1480,905 1500,915`],
  [540, 740, 2.8, 3, `0,498 25,523 65,513 100,522 130,513 160,475 185,443 205,440 230,448 310,451 340,468 400,473 460,468 480,464 520,473 570,471 610,468 620,456 640,460 665,495 685,518 700,520 740,500 770,472 810,470 840,476 880,492 910,485 935,445 980,447 1000,458 1050,463 1090,485 1140,492 1170,499 1200,490 1240,467 1260,480 1300,520 1320,523 1350,575 1370,595 1405,645 1455,638 1480,655 1505,645`],
  [1080, 740, 3, 3, `0,638 30,622 50,600 80,601 130,548 160,552 200,538 250,521 285,520 303,506 330,530 365,545 400,533 440,530 460,515 480,519 500,511 520,518 535,515 543,502 570,520 580,548 590,551 610,532 660,551 685,535 700,500 715,487 728,488 745,520 770,491 790,510 830,550 845,590 860,620 885,635 920,608 940,630 985,640 1000,654 1035,654 1050,638 1085,640 1118,607`]
])), '#e0e0e0', 1.3);
path(macd, line(points([
  [0, 600, 2.8, 3, `128,842 150,860 180,875 210,890 235,915 260,940 285,953 310,945 340,935 395,938 430,920 460,893 490,883 515,881 550,893 580,912 610,920 650,903 690,885 735,858 780,842 825,840 845,860 880,900 910,935 935,962 955,962 985,935 1005,895 1025,830 1045,740 1065,660 1080,625 1100,598 1140,577 1175,568 1200,545 1215,532 1235,533 1255,550 1285,600 1300,632 1340,685 1380,745 1430,810 1465,860 1500,888`],
  [540, 740, 2.8, 3, `0,478 25,497 60,511 110,518 140,516 170,498 210,460 245,455 320,450 370,463 420,470 500,470 540,473 600,470 655,465 690,490 720,503 745,505 780,490 830,474 870,484 915,484 950,465 985,454 1030,460 1080,468 1120,482 1180,494 1230,487 1260,478 1300,497 1340,530 1380,575 1410,605 1450,628 1480,642 1505,643`],
  [1080, 740, 3, 3, `0,643 20,640 60,620 110,600 150,570 200,548 260,530 310,517 370,532 435,533 480,524 560,514 580,525 630,534 680,543 700,532 730,510 750,513 780,506 800,508 835,530 860,565 890,597 940,610 990,628 1030,645 1090,640 1120,630`]
])), '#e0e000', 1.3);
```
